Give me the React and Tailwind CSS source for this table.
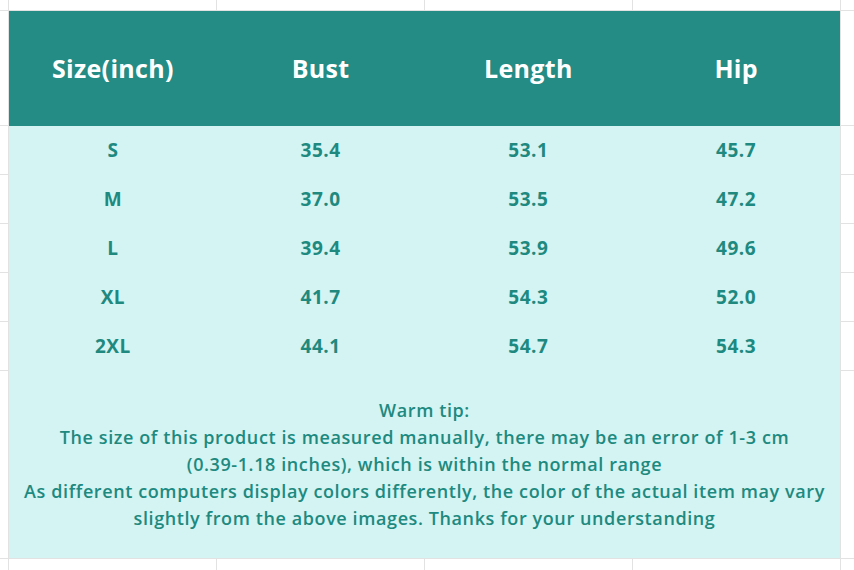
export default function App() {
  const rows = [
    ["S", "35.4", "53.1", "45.7"],
    ["M", "37.0", "53.5", "47.2"],
    ["L", "39.4", "53.9", "49.6"],
    ["XL", "41.7", "54.3", "52.0"],
    ["2XL", "44.1", "54.7", "54.3"],
  ];
  const fillers = Array.from({ length: 26 });
  return (
    <div
      className="grid h-[570px] w-[854px] gap-px bg-[#e2e2e2] grid-cols-[8px_207px_207px_207px_207px_1fr] grid-rows-[10px_114px_48px_48px_48px_48px_48px_187px_1fr] overflow-hidden"
      style={{ fontFamily: '"Open Sans", "Noto Sans", sans-serif' }}
    >
      <div className="col-start-2 col-span-4 row-start-2 row-span-7 flex flex-col">
        <div className="grid h-[115px] grid-cols-4 items-center bg-[#248c84] text-[25px] font-bold tracking-[0.3px] text-white">
          <div className="text-center">Size(inch)</div>
          <div className="text-center">Bust</div>
          <div className="text-center">Length</div>
          <div className="text-center">Hip</div>
        </div>
        <div className="flex flex-1 flex-col bg-[#d3f4f2] text-[#20897f]">
          {rows.map((r) => (
            <div key={r[0]} className="grid h-[49px] grid-cols-4 items-center text-[19px] font-bold tracking-[0.5px]">
              {r.map((c, i) => (
                <div key={i} className="text-center">{c}</div>
              ))}
            </div>
          ))}
          <div className="flex flex-1 flex-col items-center justify-center text-center text-[18px] font-semibold leading-[27px] tracking-[0.6px]">
            <div>Warm tip:</div>
            <div>The size of this product is measured manually, there may be an error of 1-3 cm</div>
            <div>(0.39-1.18 inches), which is within the normal range</div>
            <div>As different computers display colors differently, the color of the actual item may vary</div>
            <div>slightly from the above images. Thanks for your understanding</div>
          </div>
        </div>
      </div>
      {fillers.map((_, i) => (
        <div key={i} className="bg-white" />
      ))}
    </div>
  );
}
